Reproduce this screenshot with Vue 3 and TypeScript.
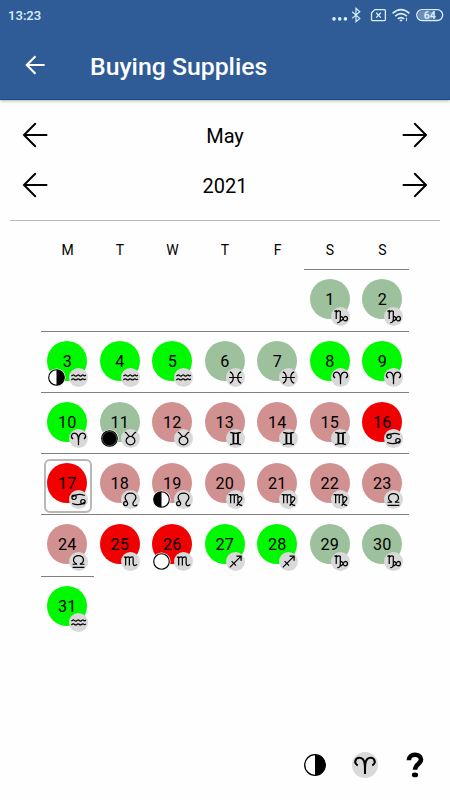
<script setup lang="ts">
type Sign = 'cap' | 'aqu' | 'pis' | 'ari' | 'tau' | 'gem' | 'can' | 'leo' | 'vir' | 'lib' | 'sco' | 'sag'
type Moon = 'first' | 'new' | 'last' | 'full'
type Rating = 'great' | 'good' | 'poor' | 'bad'

interface Day {
  n: number
  rating: Rating
  sign: Sign
  moon?: Moon
}

// Each glyph is stroked inside a 20x20 box.
const glyphs: Record<Sign, string> = {
  cap: 'M3.6 4.6L5.5 3.9V12.6M5.5 5.8Q8 3 9.8 4.7V13Q9.8 16.6 6.6 16.4M9.8 12C10.2 9.4 11.6 9.7 12.2 11.2C13 13.6 13.9 14.8 15.2 14.6C18.2 14 17.7 9.9 15.2 9.9C12.6 10 12.7 15 9.8 14.6',
  aqu: 'M2.5 8.6Q4.4 6.6 5.6 7.8T8 8.3Q9.7 6.7 10.7 7.8T13 8.3Q14.6 6.7 15.4 7.8T17.7 7.4M2.5 12.6Q4.4 10.6 5.6 11.8T8 12.3Q9.7 10.7 10.7 11.8T13 12.3Q14.6 10.7 15.4 11.8T17.7 11.4',
  pis: 'M4 4Q7.6 5.2 7.6 10T4 16M16 4Q12.4 5.2 12.4 10T16 16M3.2 10H16.8',
  ari: 'M4.4 10.4C1 8.6 2.7 4.4 5.6 4.4C9 4.4 10 8.5 10 12V17M15.6 10.4C19 8.6 17.3 4.4 14.4 4.4C11 4.4 10 8.5 10 12',
  tau: 'M4 3.3C7.2 3.5 6.5 7.9 10 7.9S12.8 3.5 16 3.3M10 7.9A4.6 4.4 0 1 0 10 16.7A4.6 4.4 0 1 0 10 7.9',
  gem: 'M4.4 3.6Q10 5.4 15.6 3.6M4.4 16.4Q10 14.6 15.6 16.4M7.5 4.6V15.4M12.3 4.6V15.4M8.1 4.6V15.4M12.9 4.6V15.4',
  can: 'M3 7.4Q9 2.6 16.6 5.8M3 7.7A2.3 2.3 0 1 0 7.6 7.7A2.3 2.3 0 1 0 3 7.7M17 12.6Q11 17.4 3.4 14.2M17 12.3A2.3 2.3 0 1 0 12.4 12.3A2.3 2.3 0 1 0 17 12.3',
  leo: 'M7 14.4A2.1 2.1 0 1 0 2.8 14.4A2.1 2.1 0 0 0 7 14.4C7 12 4.3 10.8 4.3 8C4.3 1.6 15.7 1.6 15.7 8C15.7 10.8 12.5 12.2 12.5 14.6C12.5 17.3 15.6 17.3 17.3 15.3',
  vir: 'M2.8 4.8H4.9V14M4.9 5.6Q8.7 3.8 8.7 5.9V14M8.7 5.6Q12.5 3.8 12.5 5.9V12.8Q12.8 16 17.2 16.4M12.5 8.3C14.4 6.2 16.7 7 16.7 9C16.7 12 12.2 13.1 11.4 16.7',
  lib: 'M3.8 16.2H16.2M3.8 12.9H7.9V12.4C2.4 9.6 4.8 3.8 10 3.8S17.6 9.6 12.1 12.4V12.9H16.2',
  sco: 'M3 5.3H4.9V14.2M4.9 6.4Q8.8 4 8.8 6.6V14.2M8.8 6.4Q12.8 4 12.8 6.6V12.1Q12.9 15.7 17 13.2',
  sag: 'M4 16.2L15.9 4.3M11 4.3H15.9V9.2M5.9 9.6L10.6 14.3',
}

const firstWeekday = 6
const weekdays = ['M', 'T', 'W', 'T', 'F', 'S', 'S']

const d = (n: number, rating: Rating, sign: Sign, moon?: Moon): Day => ({ n, rating, sign, moon })
const days: Day[] = [
  d(1, 'good', 'cap'), d(2, 'good', 'cap'),
  d(3, 'great', 'aqu', 'first'), d(4, 'great', 'aqu'), d(5, 'great', 'aqu'),
  d(6, 'good', 'pis'), d(7, 'good', 'pis'), d(8, 'great', 'ari'), d(9, 'great', 'ari'),
  d(10, 'great', 'ari'), d(11, 'good', 'tau', 'new'), d(12, 'poor', 'tau'),
  d(13, 'poor', 'gem'), d(14, 'poor', 'gem'), d(15, 'poor', 'gem'), d(16, 'bad', 'can'),
  d(17, 'bad', 'can'), d(18, 'poor', 'leo'), d(19, 'poor', 'leo', 'last'),
  d(20, 'poor', 'vir'), d(21, 'poor', 'vir'), d(22, 'poor', 'vir'), d(23, 'poor', 'lib'),
  d(24, 'poor', 'lib'), d(25, 'bad', 'sco'), d(26, 'bad', 'sco', 'full'),
  d(27, 'great', 'sag'), d(28, 'great', 'sag'), d(29, 'good', 'cap'), d(30, 'good', 'cap'),
  d(31, 'great', 'aqu'),
]
const selected = 17
const pickers = ['May', '2021']
</script>

<template>
  <main class="screen">
    <header class="top">
      <div class="status">
        <span class="clock">13:23</span>
        <svg class="indicators" viewBox="0 0 114 20">
          <g fill="currentColor">
            <circle cx="4" cy="13.9" r="1.8" /><circle cx="9.7" cy="13.9" r="1.8" /><circle cx="15.4" cy="13.9" r="1.8" />
          </g>
          <g fill="none" stroke="currentColor" stroke-width="1.3">
            <path d="M22.2 6.7L29.8 13.4L26 16.7V3.4L29.8 6.7L22.2 13.4" stroke-width="1.2" />
            <path d="M44.8 4.6H54.4Q55.4 4.6 55.4 5.6V14.6Q55.4 15.6 54.4 15.6H42.5Q41.5 15.6 41.5 14.6V8Z" />
            <path d="M46.2 7.8L50.8 12.6M50.8 7.8L46.2 12.6" />
            <path d="M62.6 8.4Q71 .9 79.4 8.4M65.2 11.2Q71 6.2 76.8 11.2M67.8 13.9Q71 11.3 74.2 13.9" stroke-width="1.7" />
            <path d="M76.5 12.7V16.2" stroke-width=".9" />
            <rect x="86.7" y="4.7" width="26" height="10.8" rx="5.4" />
          </g>
          <path d="M69.3 15Q71 13.8 72.7 15L71 16.8Z" fill="currentColor" />
          <rect x="88" y="6" width="15" height="8.2" rx="4" fill="#fff" opacity=".3" />
          <text x="99.7" y="13.9" text-anchor="middle" class="battery">64</text>
        </svg>
      </div>
      <div class="bar">
        <svg class="back" viewBox="0 0 24 24"><path d="M22.5 12H3M12.5 2.5L3 12L12.5 21.5" /></svg>
        <h1>Buying Supplies</h1>
      </div>
    </header>

    <section class="pickers">
      <div v-for="label in pickers" :key="label" class="picker">
        <svg class="arrow" viewBox="0 0 26 26"><path d="M24.5 13H2M13.2 1.7L2 13L13.2 24.3" /></svg>
        <span class="label">{{ label }}</span>
        <svg class="arrow" viewBox="0 0 26 26"><path d="M1.5 13H24M12.8 1.7L24 13L12.8 24.3" /></svg>
      </div>
    </section>

    <section class="calendar">
      <div class="weekdays">
        <span v-for="(w, i) in weekdays" :key="i">{{ w }}</span>
      </div>
      <div class="days">
        <div
          v-for="day in days"
          :key="day.n"
          class="cell"
          :style="day.n === 1 ? { gridColumnStart: firstWeekday } : undefined"
        >
          <div class="mark" :class="{ selected: day.n === selected }">
            <div class="disc" :class="day.rating">{{ day.n }}</div>
            <svg v-if="day.moon" class="moon" viewBox="0 0 20 20">
              <circle cx="10" cy="10" r="9.5" fill="#fff" />
              <circle cx="10" cy="10" r="8.2" :fill="day.moon === 'new' ? '#000' : '#fff'" stroke="#000" stroke-width="1.2" />
              <path v-if="day.moon === 'first'" d="M10 1.8A8.2 8.2 0 0 1 10 18.2Z" />
              <path v-if="day.moon === 'last'" d="M10 1.8A8.2 8.2 0 0 0 10 18.2Z" />
              <circle v-if="day.moon === 'new'" cx="10" cy="10" r="7.5" fill="none" stroke="#999" stroke-width=".5" />
            </svg>
            <svg class="sign" viewBox="0 0 20 20"><path :d="glyphs[day.sign]" /></svg>
          </div>
        </div>
      </div>
    </section>

    <footer class="legend">
      <svg class="phase" viewBox="0 0 24 24">
        <circle cx="12" cy="12" r="10.3" fill="#fff" stroke="#000" stroke-width="1.3" />
        <path d="M12 1.7A10.3 10.3 0 0 1 12 22.3Z" />
      </svg>
      <svg class="zodiac" viewBox="0 0 20 20"><path :d="glyphs.ari" /></svg>
      <svg class="help" viewBox="0 0 18 26">
        <path d="M2.9 8.3C2.7 1.1 15 1 15 7.6C15 11.8 9.1 12.2 9.1 17.8" fill="none" stroke="#000" stroke-width="4.6" />
        <ellipse cx="9" cy="22.9" rx="3.1" ry="2.4" />
      </svg>
    </footer>
  </main>
</template>

<style>
body {
  margin: 0;
  background: #fefefe;
}
</style>

<style scoped>
.screen {
  display: flex;
  flex-direction: column;
  width: 450px;
  height: 800px;
  overflow: hidden;
  background: #fefefe;
  color: #000;
  font-family: Roboto, 'Liberation Sans', sans-serif;
}
.top {
  box-sizing: border-box;
  height: 100px;
  flex: none;
  background: #2f5c97;
  border-bottom: 1px solid #174a86;
  box-shadow: 0 1px 3px rgba(0, 0, 0, 0.3);
  color: #fff;
}
.status {
  display: flex;
  align-items: center;
  justify-content: space-between;
  height: 30px;
  padding: 0 6px 0 8px;
  color: #d9efff;
}
.clock {
  font-size: 13.1px;
  font-weight: 500;
}
.indicators {
  width: 114px;
  height: 20px;
}
.battery {
  fill: currentColor;
  font-size: 10.5px;
  font-weight: 700;
}
.bar {
  display: flex;
  align-items: center;
  gap: 54px;
  height: 70px;
  padding-left: 24px;
}
.back {
  width: 22px;
  height: 22px;
  fill: none;
  stroke: #fff;
  stroke-width: 2.3;
}
h1 {
  margin: 4px 0 0 -10px;
  font-size: 24.8px;
  font-weight: 500;
  line-height: 30px;
}
.pickers {
  box-sizing: border-box;
  height: 121px;
  flex: none;
  margin: 0 10px;
  padding-top: 10px;
  border-bottom: 1px solid #bababa;
}
.picker {
  display: flex;
  align-items: center;
  justify-content: space-between;
  height: 50px;
  padding: 0 12px;
  font-size: 20px;
}
.label {
  padding-top: 2px;
}
.arrow {
  width: 26px;
  height: 26px;
  fill: none;
  stroke: #000;
  stroke-width: 2;
  stroke-linecap: round;
}
.calendar {
  flex: 1;
  width: 367.5px;
  margin-left: 41.25px;
}
.weekdays {
  display: grid;
  grid-template-columns: repeat(7, 1fr);
  height: 48.4px;
  line-height: 58px;
  font-size: 14px;
  text-align: center;
}
.days {
  display: grid;
  grid-template-columns: repeat(7, 1fr);
  grid-auto-rows: 61.25px;
}
.cell {
  display: flex;
  justify-content: center;
  border-top: 1px solid #808080;
}
.mark {
  position: relative;
  box-sizing: border-box;
  width: 48px;
  height: 54px;
  margin-top: 5px;
  padding-top: 2px;
  border: 2px solid transparent;
  border-radius: 6px;
}
.mark.selected {
  border-color: #b8b8b8;
}
.disc {
  width: 40px;
  height: 40px;
  margin-left: 1.7px;
  border-radius: 50%;
  font-size: 16.2px;
  line-height: 42px;
  text-align: center;
}
.great {
  background: #00f900;
}
.good {
  background: #9dc19d;
}
.poor {
  background: #d29191;
}
.bad {
  background: #f00000;
}
.sign {
  position: absolute;
  left: 23px;
  top: 29.2px;
  width: 19px;
  height: 19px;
  border-radius: 50%;
  background: #d9d9d9;
  fill: none;
  stroke: #000;
  stroke-width: 1.3;
}
.moon {
  position: absolute;
  left: 1.7px;
  top: 29.2px;
  width: 19px;
  height: 19px;
}
.legend {
  display: flex;
  align-items: center;
  height: 50px;
  margin-bottom: 10px;
  padding-left: 303px;
}
.phase {
  width: 24px;
  height: 24px;
}
.zodiac {
  width: 26px;
  height: 26px;
  margin-left: 25px;
  border-radius: 50%;
  background: #d9d9d9;
  fill: none;
  stroke: #000;
  stroke-width: 1.6;
}
.help {
  width: 18px;
  height: 26px;
  margin-left: 28px;
}
</style>
